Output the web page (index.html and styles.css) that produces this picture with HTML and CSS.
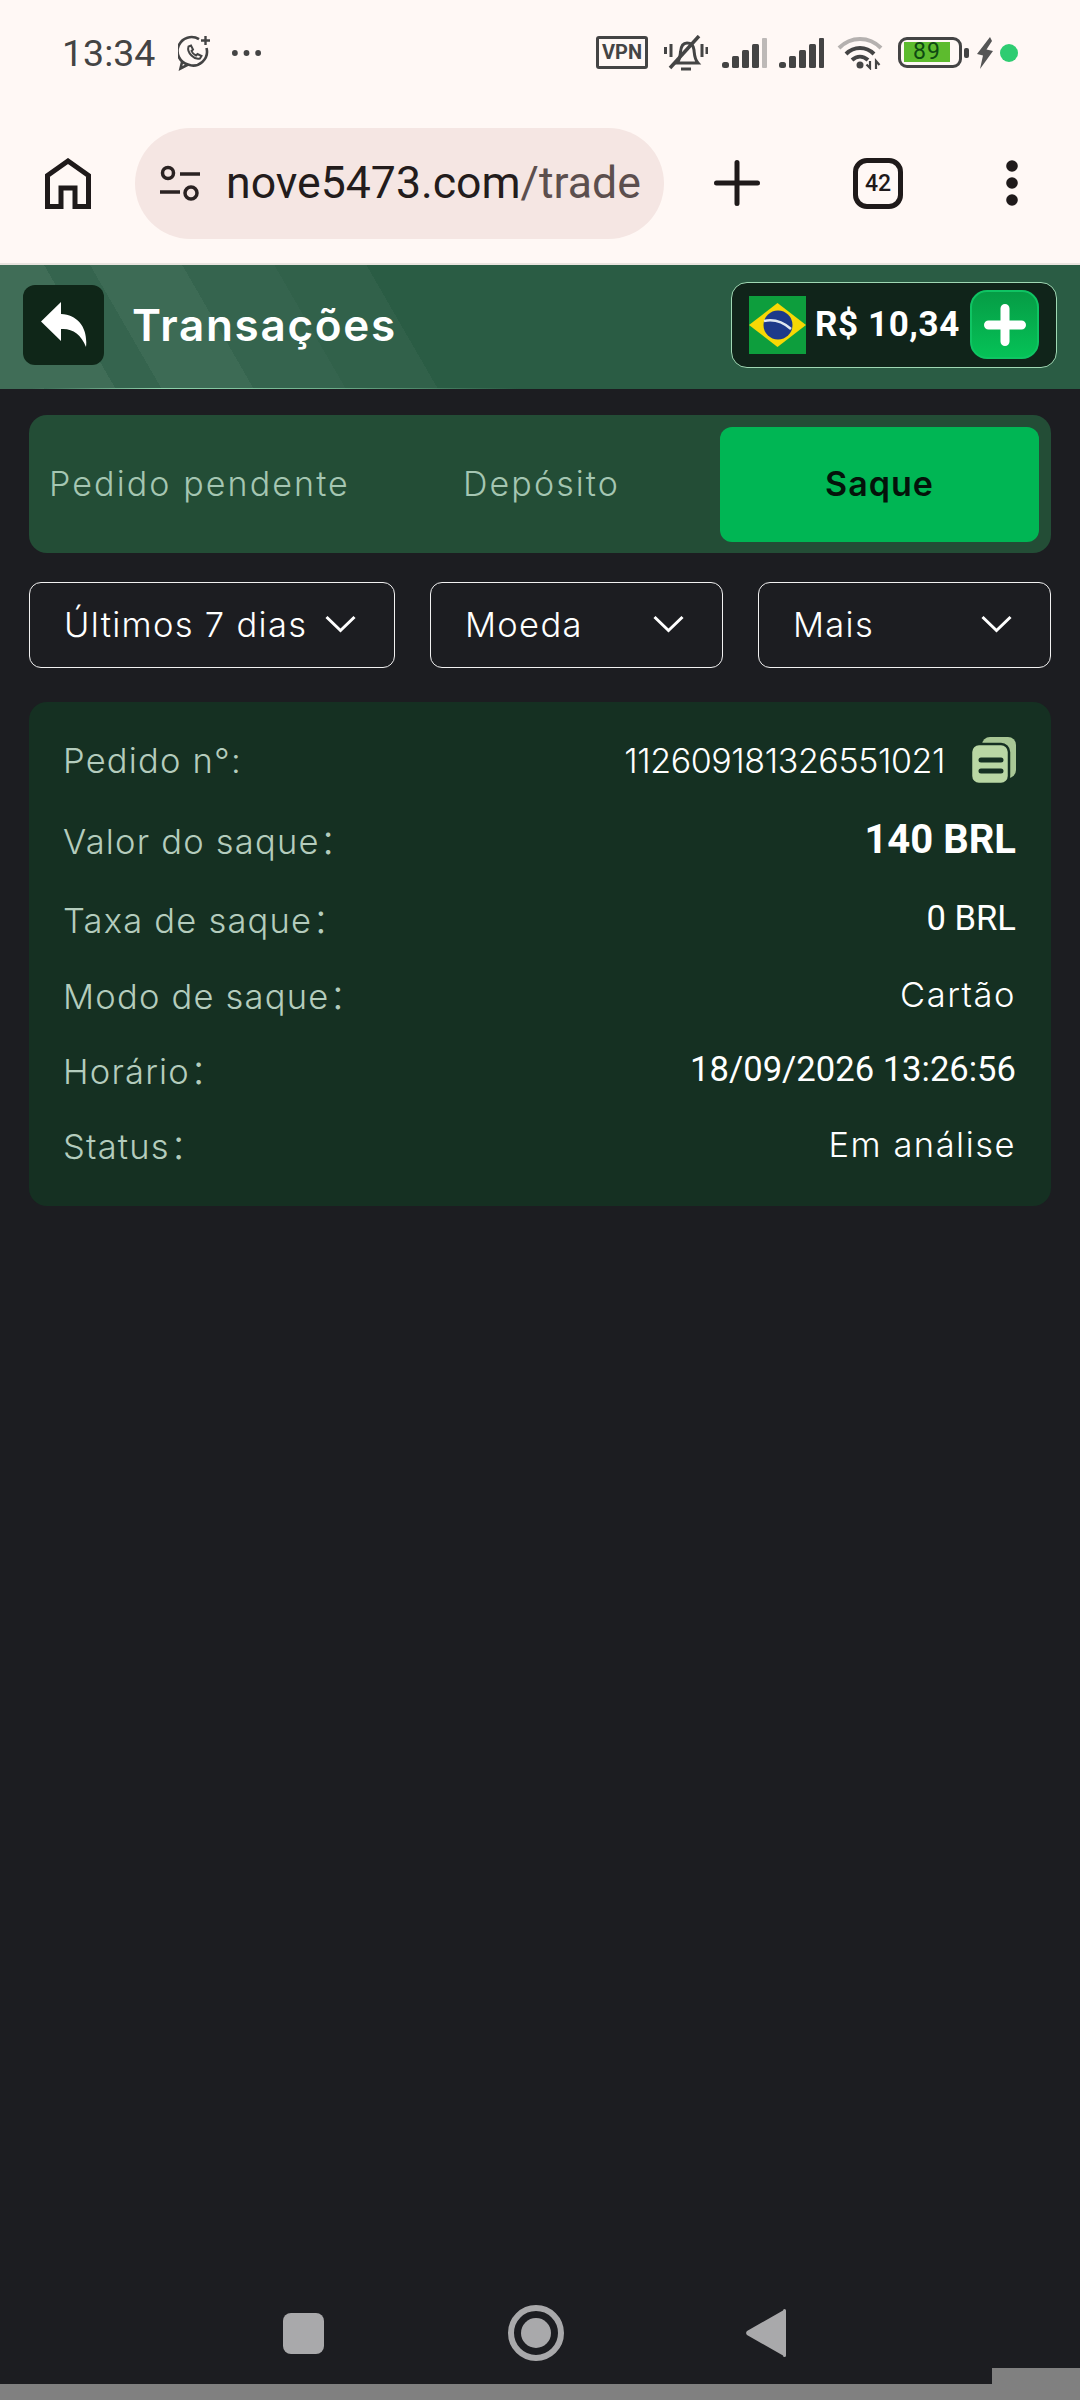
FILE: index.html
```html
<!DOCTYPE html>
<html lang="pt-BR">
<head>
    <meta charset="UTF-8">
    <meta name="viewport" content="width=device-width, initial-scale=1.0">
    <title>Transações</title>
    <link rel="stylesheet" href="styles.css">
</head>
<body>
    <div class="chrome">
        <div class="status-bar">
            <div class="status-left">
                <span class="clock">13:34</span>
                <svg class="icon-wa" viewBox="0 0 34 36" fill="none" stroke="#444" stroke-width="2.6">
                    <path d="M21 4.200A14 14 0 1 0 10 29.600L2.500 33.500 4.400 25.500M28.500 13A14 14 0 0 1 10 29.600"/>
                    <path d="M10.500 11.500c-1 3 .5 6.500 3 9s5.500 4 8.500 3l1.500-2.500-4-2-1.500 1.500c-2-.8-3.700-2.500-4.500-4.500l1.500-1.500-2-4z" stroke-width="2"/>
                    <path d="M27.500 1v9M23 5.500h9" stroke-width="2.400"/>
                </svg>
                <svg class="icon-more" viewBox="0 0 32 8" fill="#444">
                    <circle cx="4" cy="4" r="3"/><circle cx="16" cy="4" r="3"/><circle cx="28" cy="4" r="3"/>
                </svg>
            </div>
            <div class="status-right">
                <span class="vpn">VPN</span>
                <svg class="icon-bell" viewBox="0 0 44 36" fill="none" stroke="#444" stroke-width="3">
                    <path d="M13 28c3-3 3-7 3.500-11 .5-6 3-9 6.500-9 4 0 6.500 2.500 7 7 .5 5 .5 9 4 13z"/>
                    <path d="M35 1 6 33" stroke-width="3.500"/>
                    <path d="M17 34h10M1.500 12v7M7 9v13M38 9v13M43 12v7" stroke-width="3"/>
                </svg>
                <svg class="icon-signal" viewBox="0 0 45 30">
                    <rect x="0" y="24" width="7" height="6" rx="2.500" fill="#444"/>
                    <rect x="10" y="18" width="7" height="12" rx="1.500" fill="#444"/>
                    <rect x="20" y="12" width="7" height="18" rx="1.500" fill="#444"/>
                    <rect x="30" y="6" width="7" height="24" rx="1.500" fill="#444"/>
                    <rect x="40" y="0" width="5" height="30" rx="1" fill="#bdb9b7"/>
                </svg>
                <svg class="icon-signal" viewBox="0 0 45 30" fill="#444">
                    <rect x="0" y="24" width="7" height="6" rx="2.500"/>
                    <rect x="10" y="18" width="7" height="12" rx="1.500"/>
                    <rect x="20" y="12" width="7" height="18" rx="1.500"/>
                    <rect x="30" y="6" width="7" height="24" rx="1.500"/>
                    <rect x="40" y="0" width="5" height="30" rx="1"/>
                </svg>
                <svg class="icon-wifi" viewBox="0 0 46 34" fill="none" stroke-width="4">
                    <path d="M2 12C14 0 32 0 44 12" stroke="#b5b1af"/>
                    <path d="M9 18c8-8 20-8 28 0M15 24c5-4.500 11-4.500 16 0" stroke="#444"/>
                    <circle cx="23" cy="29" r="3.500" fill="#444" stroke="none"/>
                    <path d="M33 25v7l-3.500-3.500M39 33v-8l3.500 4" stroke="#444" stroke-width="2.200"/>
                </svg>
                <div class="battery">
                    <div class="battery-body"><span class="battery-fill">89</span></div>
                    <span class="battery-nub"></span>
                </div>
                <svg class="icon-bolt" viewBox="0 0 16 32" fill="#555">
                    <path d="M13 0 0 17l6 1.500L3 32l13-18-6.500-1.500L15 4z"/>
                </svg>
                <span class="status-dot"></span>
            </div>
        </div>

        <div class="toolbar">
            <svg class="icon-home" viewBox="0 0 46 51" fill="none" stroke="#1f1a1a" stroke-width="5">
                <path d="M2.500 48.500V17.500L23 3l20.500 14.500v31H30V30H16v18.500z"/>
            </svg>
            <div class="url-pill">
                <svg class="icon-site" viewBox="0 0 42 36" fill="none" stroke="#2a2222" stroke-width="3.500">
                    <circle cx="9" cy="8" r="5.500"/>
                    <path d="M21 9h20M1 27h20"/>
                    <circle cx="32" cy="28" r="6"/>
                </svg>
                <span class="url-text">nove5473.com<span class="url-path">/trade</span></span>
            </div>
            <svg class="icon-plus" viewBox="0 0 46 46" fill="none" stroke="#1f1a1a" stroke-width="5" stroke-linecap="round">
                <path d="M23 2.500v41M2.500 23h41"/>
            </svg>
            <span class="tab-count">42</span>
            <svg class="icon-menu" viewBox="0 0 12 46" fill="#1f1a1a">
                <circle cx="6" cy="6" r="5.800"/><circle cx="6" cy="23" r="5.800"/><circle cx="6" cy="40" r="5.800"/>
            </svg>
        </div>
    </div>

    <header class="site-header">
        <div class="header-left">
            <button class="back-btn">
                <svg viewBox="0 0 46 46" fill="#fff">
                    <path d="M20 0 0 19.500 20 39V27c11-1 20 5 25 18 2-18-7-32-25-33z"/>
                </svg>
            </button>
            <h1>Transações</h1>
        </div>
        <div class="balance">
            <svg class="flag" viewBox="0 0 57 58">
                <rect width="57" height="58" fill="#0d9e3d"/>
                <path d="M28.500 7 57 29 28.500 51 0 29z" fill="#f7d805"/>
                <circle cx="29" cy="29" r="14.500" fill="#1d3a8a"/>
                <path d="M15 25c9-2 19 1 27 8" fill="none" stroke="#dfe8f0" stroke-width="2.500"/>
            </svg>
            <span class="balance-value">R$ 10,34</span>
            <button class="add-btn">
                <svg viewBox="0 0 42 42" fill="none" stroke="#fff" stroke-width="9" stroke-linecap="round">
                    <path d="M21 4.500v33M4.500 21h33"/>
                </svg>
            </button>
        </div>
    </header>

    <main class="content">
        <nav class="tabs">
            <a class="tab tab-pending">Pedido pendente</a>
            <a class="tab tab-deposit">Depósito</a>
            <a class="tab tab-active">Saque</a>
        </nav>

        <div class="filters">
            <div class="filter filter-days">Últimos 7 dias
                <svg viewBox="0 0 31 18" fill="none" stroke="#fff" stroke-width="3"><path d="M1.500 2 15.500 15.500 29.500 2"/></svg>
            </div>
            <div class="filter filter-coin">Moeda
                <svg viewBox="0 0 31 18" fill="none" stroke="#fff" stroke-width="3"><path d="M1.500 2 15.500 15.500 29.500 2"/></svg>
            </div>
            <div class="filter filter-more">Mais
                <svg viewBox="0 0 31 18" fill="none" stroke="#fff" stroke-width="3"><path d="M1.500 2 15.500 15.500 29.500 2"/></svg>
            </div>
        </div>

        <section class="card">
            <div class="row row-order">
                <span class="label">Pedido n°:</span>
                <span class="value order-value">112609181326551021
                    <svg class="icon-copy" viewBox="0 0 44 46">
                        <rect x="10" y="0" width="34" height="41" rx="8" fill="#a8c795"/>
                        <rect x="-1" y="7" width="38" height="40" rx="8" fill="#b9d7a4" stroke="#153022" stroke-width="2.500"/>
                        <path d="M9 23h20M9 34h20" stroke="#153022" stroke-width="5" stroke-linecap="round"/>
                    </svg>
                </span>
            </div>
            <div class="row row-amount">
                <span class="label">Valor do saque：</span>
                <span class="value value-amount">140 BRL</span>
            </div>
            <div class="row">
                <span class="label">Taxa de saque：</span>
                <span class="value value-num">0 BRL</span>
            </div>
            <div class="row row-mode">
                <span class="label">Modo de saque：</span>
                <span class="value">Cartão</span>
            </div>
            <div class="row row-time">
                <span class="label">Horário：</span>
                <span class="value value-num">18/09/2026 13:26:56</span>
            </div>
            <div class="row row-status">
                <span class="label">Status：</span>
                <span class="value">Em análise</span>
            </div>
        </section>
    </main>

    <div class="nav-bar">
        <span class="nav-square"></span>
        <span class="nav-circle"><span></span></span>
        <svg class="nav-back" viewBox="0 0 40 48" fill="#a9a9ab">
            <path d="M37 1.500a1.500 1.500 0 0 1 3 0v45a1.500 1.500 0 0 1-3 0L1 26a3 3 0 0 1 0-4z"/>
        </svg>
    </div>
    <div class="bottom-strip">
        <span class="strip-line"></span>
        <span class="strip-tab"></span>
    </div>
</body>
</html>
```

FILE: styles.css
```css
* {
    box-sizing: border-box;
}
body {
    margin: 0;
    width: 1080px;
    height: 2400px;
    display: flex;
    flex-direction: column;
    background-color: #1c1d21;
    font-family: Inter, "Noto Sans CJK SC", sans-serif;
    overflow: hidden;
}
svg {
    display: block;
    flex: none;
}

/* phone + browser chrome */
.chrome {
    height: 265px;
    background-color: #fff8f5;
    border-bottom: 2px solid #e9e4df;
}
.status-bar {
    height: 105px;
    display: flex;
    justify-content: space-between;
    align-items: center;
    padding: 0 62px 0 62px;
}
.status-left, .status-right {
    display: flex;
    align-items: center;
}
.clock {
    font-family: Roboto, sans-serif;
    font-size: 37.5px;
    color: #444;
    width: 96px;
}
.icon-wa {
    width: 34px;
    height: 36px;
    margin-left: 20px;
}
.icon-more {
    width: 31px;
    height: 8px;
    margin-left: 19px;
}
.vpn {
    width: 52px;
    height: 33px;
    border: 3px solid #444;
    border-radius: 3px;
    font-family: Roboto, sans-serif;
    font-weight: 700;
    font-size: 20px;
    line-height: 27px;
    text-align: center;
    color: #444;
}
.icon-bell {
    width: 44px;
    height: 36px;
    margin-left: 16px;
}
.icon-signal {
    width: 45px;
    height: 30px;
    margin-left: 14px;
}
.icon-signal + .icon-signal {
    margin-left: 12px;
}
.icon-wifi {
    width: 46px;
    height: 34px;
    margin-left: 13px;
}
.battery {
    display: flex;
    align-items: center;
    margin-left: 15px;
}
.battery-body {
    width: 64px;
    height: 31px;
    border: 3px solid #444;
    border-radius: 9px;
    padding: 2px 0 2px 3px;
}
.battery-fill {
    display: block;
    width: 46px;
    height: 20px;
    background-color: #5dbb2e;
    font-family: Roboto, sans-serif;
    font-size: 23px;
    letter-spacing: 1px;
    line-height: 20px;
    text-align: center;
    color: #0f4a12;
}
.battery-nub {
    width: 5px;
    height: 10px;
    margin-left: 2px;
    border-radius: 2px;
    background-color: #444;
}
.icon-bolt {
    width: 16px;
    height: 32px;
    margin-left: 8px;
}
.status-dot {
    width: 18px;
    height: 18px;
    margin-left: 7px;
    border-radius: 50%;
    background-color: #2ecc71;
}

.toolbar {
    height: 158px;
    display: flex;
    align-items: center;
    padding: 0 0 2px 45px;
}
.icon-home {
    width: 46px;
    height: 51px;
}
.url-pill {
    width: 529px;
    height: 111px;
    margin-left: 44px;
    padding-left: 24px;
    display: flex;
    align-items: center;
    border-radius: 56px;
    background-color: #f5e6e3;
}
.icon-site {
    width: 42px;
    height: 36px;
}
.url-text {
    margin-left: 25px;
    font-family: Roboto, sans-serif;
    font-size: 44.6px;
    color: #231c1c;
    white-space: nowrap;
}
.url-path {
    color: #5c4f4e;
}
.icon-plus {
    width: 46px;
    height: 46px;
    margin-left: 50px;
}
.tab-count {
    width: 50px;
    height: 51px;
    margin-left: 93px;
    border: 5px solid #1f1a1a;
    border-radius: 14px;
    font-family: Roboto, sans-serif;
    font-weight: 500;
    font-size: 23px;
    line-height: 41px;
    text-align: center;
    color: #1f1a1a;
}
.icon-menu {
    width: 12px;
    height: 46px;
    margin-left: 103px;
}

/* page header */
.site-header {
    height: 124px;
    display: flex;
    justify-content: space-between;
    align-items: center;
    padding: 0 23px 4px 23px;
    border-bottom: 1px solid transparent;
    border-image: linear-gradient(90deg, transparent 3%, #8fd3ac 15%, #6fb08c 30%, transparent 48%) 1;
    background:
        linear-gradient(60deg,
            rgba(255,255,255,.1) 0 10%,
            rgba(255,255,255,.05) 10% 14%,
            rgba(255,255,255,.09) 14% 22%,
            rgba(255,255,255,.05) 22% 30%,
            rgba(255,255,255,.03) 30% 38%,
            transparent 38%),
        #2a5c44;
}
.header-left {
    display: flex;
    align-items: center;
}
.back-btn {
    width: 81px;
    height: 80px;
    display: flex;
    align-items: center;
    justify-content: center;
    padding: 0;
    border: none;
    border-radius: 12px;
    background-color: #0f2618;
}
.back-btn svg {
    width: 46px;
    height: 46px;
}
h1 {
    margin: 0 0 0 28px;
    font-size: 44px;
    font-weight: 600;
    letter-spacing: 1.7px;
    color: #fff;
}
.balance {
    width: 326px;
    height: 86px;
    display: flex;
    align-items: center;
    padding: 0 17px;
    border: 1px solid #9fd8b4;
    border-radius: 16px;
    background-color: #10241a;
}
.flag {
    width: 57px;
    height: 58px;
}
.balance-value {
    margin-left: 9px;
    width: 155px;
    font-family: Roboto, sans-serif;
    font-weight: 700;
    font-size: 35px;
    letter-spacing: .6px;
    color: #fff;
    white-space: nowrap;
}
.add-btn {
    width: 69px;
    height: 69px;
    display: flex;
    align-items: center;
    justify-content: center;
    padding: 0;
    border: 2px solid #0fc463;
    border-radius: 17px;
    background: linear-gradient(180deg, #069c45, #05c257);
}
.add-btn svg {
    width: 42px;
    height: 42px;
}

/* tabs */
.content {
    flex: 1;
    padding: 26px 29px 0 29px;
}
.tabs {
    height: 138px;
    display: flex;
    align-items: center;
    padding-right: 12px;
    border-radius: 18px;
    background-color: #234d36;
}
.tab {
    padding-bottom: 2px;
    font-size: 34px;
    font-weight: 300;
    letter-spacing: 2.1px;
    color: #a5c6b2;
    white-space: nowrap;
}
.tab-pending {
    margin-left: 20px;
    width: 414px;
}
.tab-deposit {
    width: 257px;
}
.tab-active {
    flex: 1;
    height: 115px;
    line-height: 113px;
    text-align: center;
    border-radius: 12px;
    background-color: #00b654;
    font-weight: 600;
    letter-spacing: 1px;
    color: #04130a;
}

/* filters */
.filters {
    display: flex;
    gap: 35px;
    margin-top: 29px;
}
.filter {
    flex: 1;
    height: 86px;
    display: flex;
    align-items: center;
    justify-content: space-between;
    padding: 0 38px 2px 34px;
    border: 1.5px solid #f1f1f1;
    border-radius: 12px;
    font-size: 34.500px;
    font-weight: 300;
    letter-spacing: 1.3px;
    color: #fff;
    white-space: nowrap;
}
.filter svg {
    width: 31px;
    height: 18px;
}
.filter-days {
    flex: none;
    width: 366px;
}

/* order card */
.card {
    margin-top: 34px;
    padding: 19px 35px 24px 34px;
    border-radius: 18px;
    background-color: #153022;
}
.row {
    height: 78px;
    display: flex;
    justify-content: space-between;
    align-items: center;
}
.row-amount {
    height: 80px;
}
.row-mode {
    height: 74px;
}
.row-time {
    height: 75px;
}
.row-status {
    height: 76px;
}
.label {
    font-size: 34.500px;
    font-weight: 300;
    letter-spacing: 1.2px;
    color: #b4ccbd;
    white-space: nowrap;
}
.value {
    font-size: 34.500px;
    font-weight: 300;
    letter-spacing: 1.5px;
    color: #fff;
    white-space: nowrap;
}
.value-amount {
    font-family: Roboto, sans-serif;
    font-weight: 700;
    font-size: 40px;
    letter-spacing: 0;
}
.value-num {
    font-family: Roboto, sans-serif;
    font-weight: 400;
    font-size: 34.600px;
    letter-spacing: 0;
}
.order-value {
    display: flex;
    align-items: center;
    gap: 27px;
    font-size: 34px;
    letter-spacing: -.4px;
}
.icon-copy {
    width: 44px;
    height: 46px;
}

/* android nav */
.nav-bar {
    height: 70px;
    display: flex;
    align-items: center;
    padding-left: 283px;
}
.nav-square {
    width: 41px;
    height: 41px;
    border-radius: 8px;
    background-color: #a9a9ab;
}
.nav-circle {
    width: 56px;
    height: 56px;
    margin-left: 184px;
    display: flex;
    align-items: center;
    justify-content: center;
    border: 6px solid #a9a9ab;
    border-radius: 50%;
}
.nav-circle span {
    width: 30px;
    height: 30px;
    border-radius: 50%;
    background-color: #a9a9ab;
}
.nav-back {
    width: 40px;
    height: 48px;
    margin-left: 182px;
}
.bottom-strip {
    height: 32px;
    display: flex;
    align-items: flex-end;
}
.strip-line {
    flex: 1;
    height: 16px;
    background-color: #808080;
}
.strip-tab {
    width: 88px;
    height: 32px;
    background-color: #808080;
}
```
